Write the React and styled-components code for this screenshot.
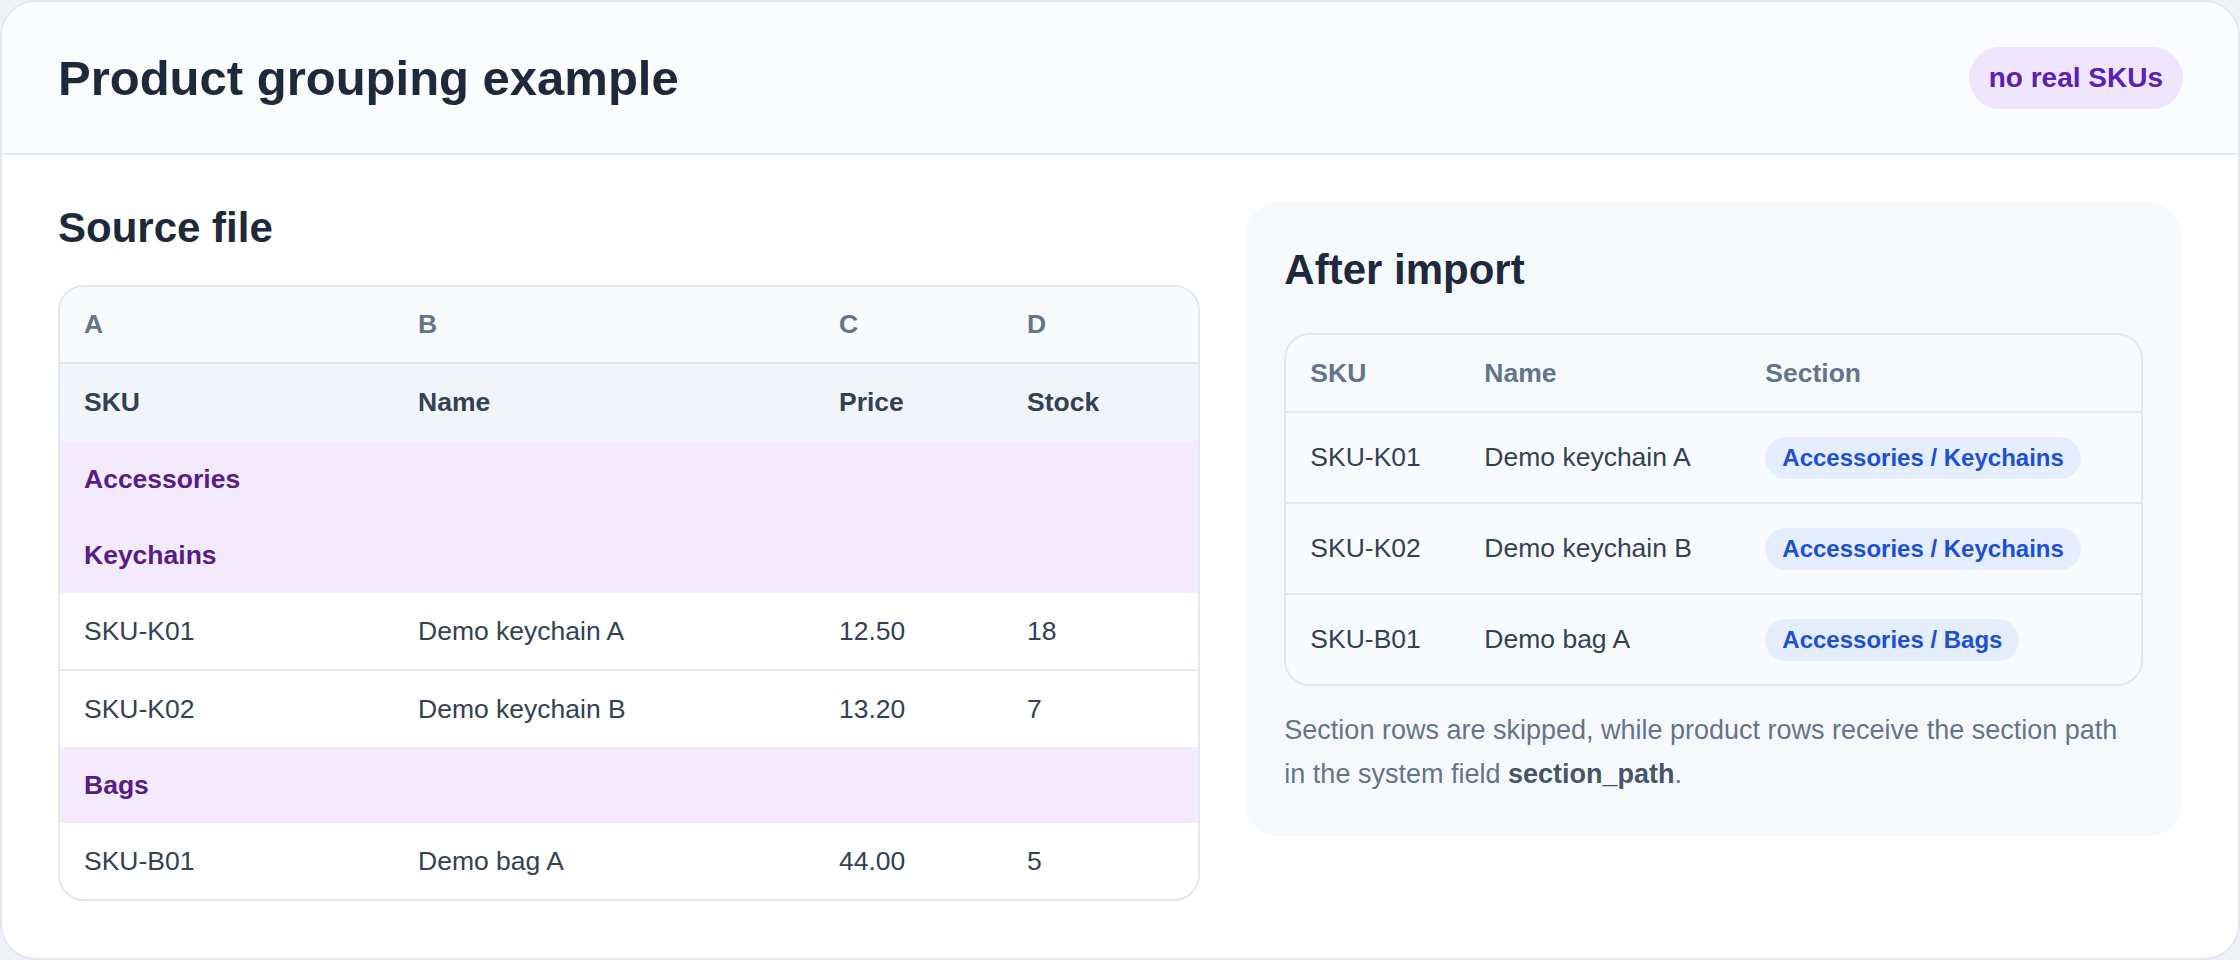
import React from "react";
import styled, { createGlobalStyle } from "styled-components";

const Global = createGlobalStyle`
  body {
    margin: 0;
    background: #eef2f6;
    font-family: "Liberation Sans", Arial, sans-serif;
  }
`;

const Card = styled.div`
  box-sizing: border-box;
  height: 960px;
  background: #fff;
  border: 2px solid #e2e8f0;
  border-radius: 36px;
  overflow: hidden;
`;

const Header = styled.header`
  height: 153px;
  box-sizing: border-box;
  display: flex;
  align-items: center;
  justify-content: space-between;
  padding: 0 55px 0 56px;
  background: #fafcfe;
  border-bottom: 2px solid #e2e8f0;
`;

const Title = styled.h1`
  margin: 0;
  font-size: 49px;
  color: #1e293b;
`;

const Badge = styled.span`
  display: inline-flex;
  align-items: center;
  height: 62px;
  padding: 0 20px;
  border-radius: 31px;
  background: #efe6fd;
  color: #5b21b6;
  font-size: 28px;
  font-weight: 700;
`;

const Body = styled.main`
  display: grid;
  grid-template-columns: 55fr 45fr;
  gap: 46px;
  align-items: start;
  padding: 50px 57px 0 56px;
`;

const SubTitle = styled.h2`
  margin: 0 0 ${(p) => p.$gap}px;
  font-size: 42px;
  line-height: 46px;
  color: #1e293b;
`;

const TableBox = styled.div`
  border: 2px solid #e2e8f0;
  border-radius: 26px;
  overflow: hidden;
  background: ${(p) => p.$bg || "#fff"};
`;

const Row = styled.div`
  display: grid;
  grid-template-columns: ${(p) => p.$cols};
  align-items: center;
  height: ${(p) => p.$h}px;
  padding: 0 24px;
  font-size: 26.5px;
  color: ${(p) => p.$color || "#1e293b"};
  font-weight: ${(p) => (p.$bold ? 700 : 400)};
  background: ${(p) => p.$bg || "transparent"};
  border-top: ${(p) => (p.$line ? "2px solid #e2e8f0" : "none")};
`;

const Panel = styled.section`
  background: #f6f9fc;
  border-radius: 32px;
  padding: 44px 38px 40px;
  margin-top: -2px;
`;

const Pill = styled.span`
  justify-self: start;
  padding: 7px 17px;
  border-radius: 22px;
  background: #e5eefe;
  color: #1d4ed8;
  font-size: 24px;
  font-weight: 700;
`;

const Note = styled.p`
  margin: 22px 0 0;
  font-size: 27px;
  line-height: 44px;
  color: #64748b;
  b { color: #475569; }
`;

const srcCols = "334px 421px 188px 1fr";
const dstCols = "174px 281px 1fr";

const source = [
  { t: "section", v: "Accessories" },
  { t: "section", v: "Keychains" },
  { t: "row", v: ["SKU-K01", "Demo keychain A", "12.50", "18"] },
  { t: "row", v: ["SKU-K02", "Demo keychain B", "13.20", "7"] },
  { t: "section", v: "Bags" },
  { t: "row", v: ["SKU-B01", "Demo bag A", "44.00", "5"] },
];

const result = [
  ["SKU-K01", "Demo keychain A", "Accessories / Keychains"],
  ["SKU-K02", "Demo keychain B", "Accessories / Keychains"],
  ["SKU-B01", "Demo bag A", "Accessories / Bags"],
];

export default function App() {
  return (
    <>
      <Global />
      <Card>
        <Header>
          <Title>Product grouping example</Title>
          <Badge>no real SKUs</Badge>
        </Header>
        <Body>
          <div>
            <SubTitle $gap={34}>Source file</SubTitle>
            <TableBox>
              <Row $cols={srcCols} $h={75} $bg="#f8fafc" $color="#64748b" $bold>
                <span>A</span><span>B</span><span>C</span><span>D</span>
              </Row>
              <Row $cols={srcCols} $h={77} $bg="#f1f5f9" $color="#334155" $bold $line>
                <span>SKU</span><span>Name</span><span>Price</span><span>Stock</span>
              </Row>
              {source.map((r, i) =>
                r.t === "section" ? (
                  <Row key={i} $cols="1fr" $h={76} $bg="#f3ebfd" $color="#581c87" $bold>
                    <span>{r.v}</span>
                  </Row>
                ) : (
                  <Row key={i} $cols={srcCols} $h={76} $line={source[i - 1].t === "row"} $color="#334155">
                    {r.v.map((c) => <span key={c}>{c}</span>)}
                  </Row>
                )
              )}
            </TableBox>
          </div>
          <Panel>
            <SubTitle $gap={40}>After import</SubTitle>
            <TableBox $bg="#f8fbfd">
              <Row $cols={dstCols} $h={76} $color="#64748b" $bold>
                <span>SKU</span><span>Name</span><span>Section</span>
              </Row>
              {result.map((r) => (
                <Row key={r[0]} $cols={dstCols} $h={89} $line $color="#334155">
                  <span>{r[0]}</span><span>{r[1]}</span><Pill>{r[2]}</Pill>
                </Row>
              ))}
            </TableBox>
            <Note>
              Section rows are skipped, while product rows receive the section
              path in the system field <b>section_path</b>.
            </Note>
          </Panel>
        </Body>
      </Card>
    </>
  );
}
